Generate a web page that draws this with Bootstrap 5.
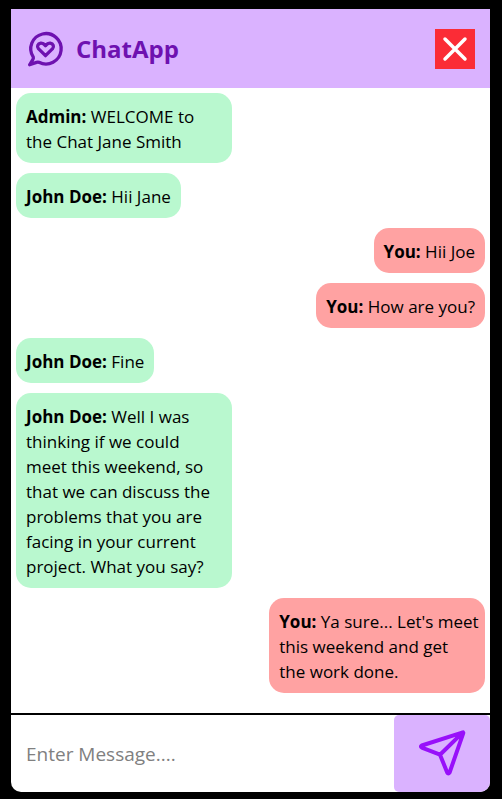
<!DOCTYPE html>
<html lang="en">
<head>
<meta charset="utf-8">
<meta name="viewport" content="width=device-width, initial-scale=1">
<title>ChatApp</title>
<link href="https://cdn.jsdelivr.net/npm/bootstrap@5.3.0/dist/css/bootstrap.min.css" rel="stylesheet">
<style>
  body { background: #000; color: #000; font-family: "Segoe UI", "Open Sans", "Noto Sans", sans-serif; }
  .chat-shell { padding: 9px 12px 7px 11px; }
  .chat-window { border-radius: 0 0 10px 10px; }
  .chat-header { background: #dab2ff; padding: 20px 15px 19px; }
  .brand { color: #6e11b0; gap: 11px; }
  .brand-name { font-size: 24px; line-height: 32px; }
  .btn-leave { width: 40px; height: 40px; background: #fb2c36; }
  .chat-log { padding: 5px; gap: 10px; }
  .bubble { max-width: 46%; padding: 11px 10px 9px; border-radius: 15px; font-size: 17px; font-weight: 500; line-height: 25px; }
  .bubble b { font-weight: 700; }
  .bubble-in { background: #b9f8cf; }
  .bubble-out { background: #ffa2a2; }
  .composer { border-top: 2px solid #000; }
  .composer-input { padding: 0 15px; font-size: 19px; line-height: 28px; }
  .composer-input::placeholder { color: #808080; }
  .btn-send { width: 20%; padding: 8px 0 9px; background: #dab2ff; border-radius: 5px; }
</style>
</head>
<body>
<div class="chat-shell vh-100 d-flex">
  <main class="chat-window bg-white flex-grow-1 d-flex flex-column overflow-hidden">
    <header class="chat-header d-flex align-items-center justify-content-between">
      <div class="brand d-flex align-items-center">
        <svg width="39" height="40" viewBox="0 0 39 40" fill="none" stroke="currentColor" stroke-width="3.3" stroke-linecap="round" stroke-linejoin="round" aria-hidden="true">
          <path d="M7.3 28.2A15.2 15.2 0 1 1 13 33.3Q11.8 33 10.5 33.4L3.6 35.8L6.8 30.6Q7.6 29.4 7.3 28.2Z"/>
          <path d="M19.5 26.7L12.4 19.7C10.7 17.7 11.6 14.6 14.8 14.1C16.9 13.9 18.3 15.1 19.5 16.7C20.7 15.1 22.1 13.9 24.2 14.1C27.4 14.6 28.3 17.7 26.6 19.7Z"/>
        </svg>
        <h1 class="brand-name fw-bold mb-0">ChatApp</h1>
      </div>
      <button type="button" class="btn-leave border-0 p-0 d-flex align-items-center justify-content-center" aria-label="Leave chat">
        <svg width="40" height="40" viewBox="0 0 40 40" stroke="#fff" stroke-width="3.5" stroke-linecap="round" aria-hidden="true"><path d="M10 10L30 30M30 10L10 30"/></svg>
      </button>
    </header>

    <section class="chat-log flex-grow-1 d-flex flex-column overflow-auto" aria-label="Messages">
      <div class="bubble bubble-in align-self-start"><b>Admin:</b> WELCOME to the Chat Jane Smith</div>
      <div class="bubble bubble-in align-self-start"><b>John Doe:</b> Hii Jane</div>
      <div class="bubble bubble-out align-self-end"><b>You:</b> Hii Joe</div>
      <div class="bubble bubble-out align-self-end"><b>You:</b> How are you?</div>
      <div class="bubble bubble-in align-self-start"><b>John Doe:</b> Fine</div>
      <div class="bubble bubble-in align-self-start"><b>John Doe:</b> Well I was thinking if we could meet this weekend, so that we can discuss the problems that you are facing in your current project. What you say?</div>
      <div class="bubble bubble-out align-self-end"><span class="text-nowrap"><b>You:</b> Ya sure... Let's meet</span> this weekend and get the work done.</div>
    </section>

    <form class="composer d-flex">
      <input type="text" class="composer-input flex-grow-1 border-0 bg-transparent" placeholder="Enter Message...." aria-label="Message">
      <button type="button" class="btn-send border-0 flex-shrink-0 d-flex justify-content-center" aria-label="Send">
        <svg width="60" height="60" viewBox="0 0 60 60" fill="none" stroke="#9810fa" stroke-width="4" stroke-linecap="round" stroke-linejoin="round" aria-hidden="true">
          <path d="M50.9 9.4L9.8 22.5Q8 23.6 9.8 24.6L28 31.7L35.2 49.5Q36.3 51.6 37.6 49.5L51.2 10.4Q51.6 9.2 50.4 9.5M28 31.7L50.6 9.6"/>
        </svg>
      </button>
    </form>
  </main>
</div>
<script src="https://cdn.jsdelivr.net/npm/bootstrap@5.3.0/dist/js/bootstrap.bundle.min.js"></script>
</body>
</html>
